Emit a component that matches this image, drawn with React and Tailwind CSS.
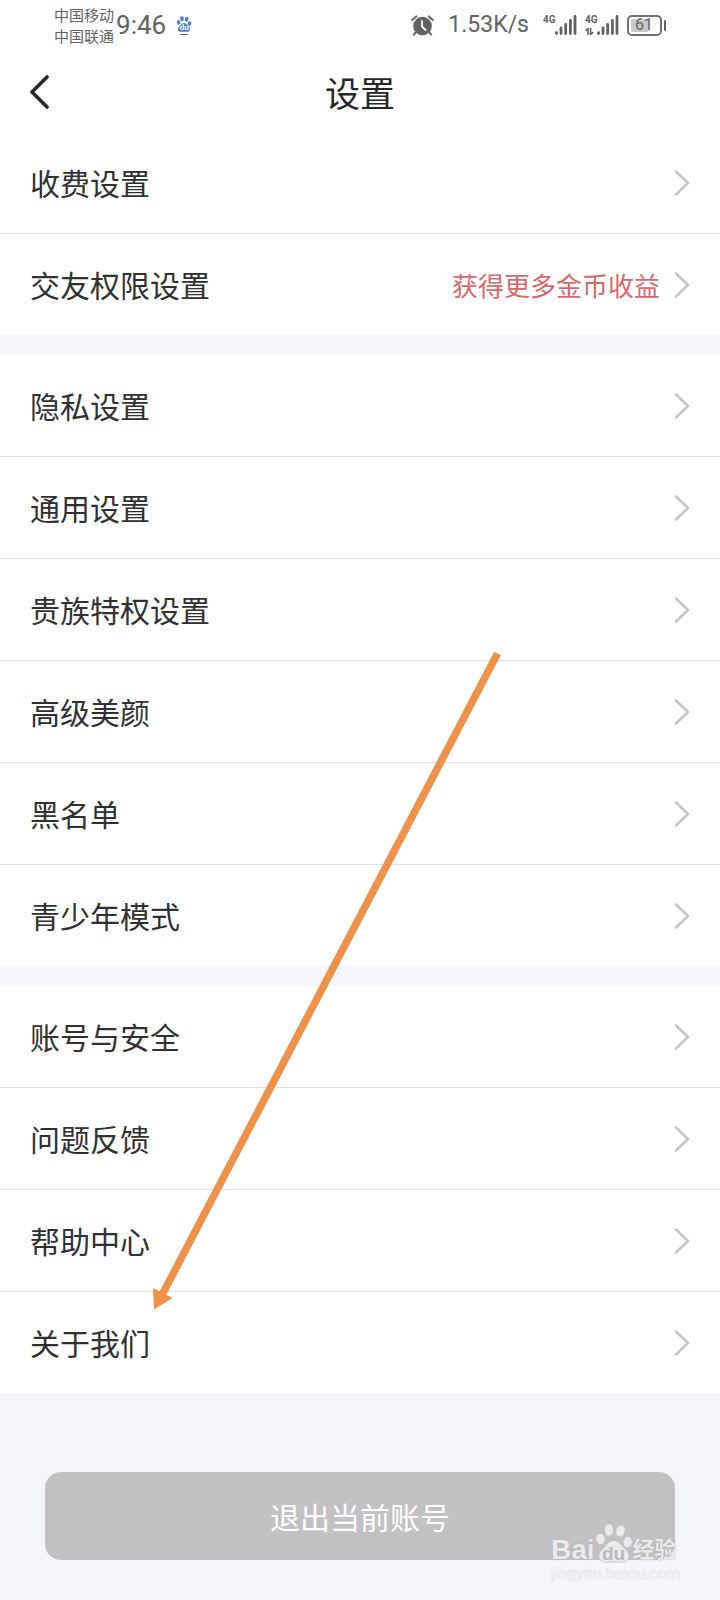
import React from "react";

const GROUPS = [
  [
    { id: "charge", label: "收费设置" },
    { id: "friends", label: "交友权限设置", hint: "获得更多金币收益" },
  ],
  [
    { id: "privacy", label: "隐私设置" },
    { id: "general", label: "通用设置" },
    { id: "noble", label: "贵族特权设置" },
    { id: "beauty", label: "高级美颜" },
    { id: "blacklist", label: "黑名单" },
    { id: "teen", label: "青少年模式" },
  ],
  [
    { id: "account", label: "账号与安全" },
    { id: "feedback", label: "问题反馈" },
    { id: "help", label: "帮助中心" },
    { id: "about", label: "关于我们" },
  ],
];

const AlarmIcon = () => (
  <svg width="23" height="21" viewBox="0 0 23 21" aria-hidden="true">
    <circle cx="11.5" cy="11" r="9.3" fill="#626262" />
    <path
      d="M1.2 5 L5.2 1.4 M21.8 5 L17.8 1.4 M5 17 L2.8 19.6 M18 17 L20.2 19.6"
      stroke="#626262"
      strokeWidth="2"
      strokeLinecap="round"
    />
    <path
      d="M11 6 V11.5 L14.6 15"
      fill="none"
      stroke="#fff"
      strokeWidth="1.8"
      strokeLinecap="round"
    />
  </svg>
);

const Signal = ({ active = false }) => (
  <div className="flex h-5">
    <div className="flex w-3 flex-col justify-between">
      <span className="font-[Roboto] text-[10px] leading-[10px] font-bold">
        4G
      </span>
      {active && (
        <svg width="9" height="7" viewBox="0 0 9 7" aria-hidden="true">
          <path
            d="M0.5 2.8 L3 0.6 V7 M5.6 0 V6.4 L8.4 4.2"
            fill="none"
            stroke="#626262"
            strokeWidth="1.6"
          />
        </svg>
      )}
    </div>
    <svg width="22" height="20" viewBox="0 0 22 20" aria-hidden="true">
      <path
        d="M1.5 18.6 V17.6 M6 18.6 V13 M10.7 18.6 V9.5 M15.4 18.6 V5.5 M20 18.6 V1.4"
        stroke="#626262"
        strokeWidth="2.8"
        strokeLinecap="round"
      />
    </svg>
  </div>
);

const Battery = () => (
  <div className="flex items-center gap-[2px]">
    <div className="flex h-[21px] w-[35px] items-center rounded-[5px] border-2 border-[#707070] p-[2px]">
      <div className="flex h-full w-[18px] items-center rounded-[2px] bg-[#c9c9c9] pl-1">
        <span className="font-[Roboto] text-base leading-none">61</span>
      </div>
    </div>
    <div className="h-[11px] w-[2px] rounded-full bg-[#626262]" />
  </div>
);

// Shared paw shape, the colours come from the caller
const Paw = ({ className, stroke }) => (
  <svg className={className} viewBox="0 0 38 40" fill="currentColor" aria-hidden="true">
    <g stroke={stroke} strokeWidth={stroke ? 0.7 : 0}>
      <ellipse cx="5.5" cy="16" rx="4.6" ry="5.8" transform="rotate(-12 5.5 16)" />
      <ellipse cx="14" cy="7" rx="4.6" ry="6.2" />
      <ellipse cx="25.5" cy="8" rx="4.6" ry="6.2" transform="rotate(12 25.5 8)" />
      <ellipse cx="32.7" cy="19" rx="4.6" ry="5.8" transform="rotate(8 32.7 19)" />
      <path d="M19 17.5 C23 17.5 25 20 28 23.5 C31.5 27 34.5 29 34 33.5 C33.5 38.5 30 39.5 26 39.3 C21 39 17 39 12.5 39.3 C7.5 39.6 4 38 3.8 33.5 C3.6 29 7 27 10 23.5 C12.5 20.5 14.5 17.5 19 17.5 Z" />
    </g>
  </svg>
);

const StatusBar = () => (
  <div className="flex h-[50px] items-center justify-between px-[54px] text-[#626262]">
    <div className="flex items-center">
      <div className="text-[15px] leading-[21px]">
        <div>中国移动</div>
        <div>中国联通</div>
      </div>
      <span className="ml-[2px] font-[Roboto] text-[26px] leading-8">9:46</span>
      <div className="ml-[10px] flex flex-col items-center gap-[2px]">
        <div className="relative">
          <Paw className="h-4 w-4 text-[#4a7cc9]" />
          <span className="absolute inset-x-0 bottom-0 text-center font-[Roboto] text-[8px] leading-[8px] font-bold text-white">
            du
          </span>
        </div>
        <div className="h-px w-2 bg-[#626262]" />
      </div>
    </div>
    <div className="flex items-center">
      <AlarmIcon />
      <span className="ml-[14px] font-[Roboto] text-[23px] leading-8">
        1.53K/s
      </span>
      <div className="ml-[14px] flex gap-2">
        <Signal />
        <Signal active />
      </div>
      <div className="ml-2">
        <Battery />
      </div>
    </div>
  </div>
);

const Header = () => (
  <header className="grid h-[82px] grid-cols-[1fr_auto_1fr] items-center px-[30px] pt-[2px]">
    <button type="button" aria-label="返回" className="justify-self-start">
      <svg width="19" height="34" viewBox="0 0 19 34" aria-hidden="true">
        <path
          d="M17 2 L2 17 L17 32"
          fill="none"
          stroke="#262626"
          strokeWidth="3.6"
          strokeLinecap="round"
          strokeLinejoin="round"
        />
      </svg>
    </button>
    <h1 className="text-[35px] leading-[52px] text-[#262626]">设置</h1>
  </header>
);

const SettingRow = ({ item }) => (
  <li className="border-b border-[#dfdfdf] last:border-b-0">
    <a
      href={`#${item.id}`}
      className="flex items-center justify-between px-[30px] py-7"
    >
      <span className="text-[30px] leading-[45px] text-[#303030]">
        {item.label}
      </span>
      <span className="flex items-center gap-[14px]">
        {item.hint && (
          <span className="text-[26px] leading-[45px] text-[#d9686b]">
            {item.hint}
          </span>
        )}
        <svg width="16" height="26" viewBox="0 0 16 26" aria-hidden="true">
          <path
            d="M2 1.5 L14 13 L2 24.5"
            fill="none"
            stroke="#c6c6c6"
            strokeWidth="2.6"
            strokeLinecap="round"
            strokeLinejoin="round"
          />
        </svg>
      </span>
    </a>
  </li>
);

const Watermark = () => (
  <div className="pointer-events-none absolute right-10 bottom-4 font-[Liberation_Sans,Noto_Sans_CJK_SC,sans-serif] text-[#ebebed] [text-shadow:0_0_2px_#a9a9ad]">
    <div className="flex items-end">
      <span className="text-[28px] leading-7 font-bold">Bai</span>
      <div className="relative">
        <Paw className="h-[42px] w-[38px]" stroke="#b8b8bc" />
        <span className="absolute inset-x-0 bottom-0 text-center text-[19px] leading-5 font-bold text-[#b9b8bb] [text-shadow:none]">
          du
        </span>
      </div>
      <span className="text-[22px] leading-7 font-bold">经验</span>
    </div>
    <div className="text-base leading-5 text-[#f3f3f6] [text-shadow:0_0_1px_#c4c4c8]">
      jingyan.baidu.com
    </div>
  </div>
);

// Annotation arrow pointing at the last row
const PointerArrow = () => (
  <svg
    className="pointer-events-none absolute inset-x-0 top-0 w-full"
    viewBox="0 0 720 1600"
    aria-hidden="true"
  >
    <path d="M497.5 653.5 L162 1295" stroke="#ee9149" strokeWidth="7.5" />
    <path d="M154 1309.5 L153 1288 L172.5 1298 Z" fill="#ee9149" />
  </svg>
);

const App = () => {
  return (
    <div className="relative flex min-h-screen flex-col bg-[#f5f6fa] font-[Noto_Sans_CJK_SC,sans-serif]">
      <div className="bg-white">
        <StatusBar />
        <Header />
      </div>
      <main className="flex flex-col gap-5">
        {GROUPS.map((group) => (
          <ul key={group[0].id} className="bg-white">
            {group.map((item) => (
              <SettingRow key={item.id} item={item} />
            ))}
          </ul>
        ))}
      </main>
      <footer className="relative flex-1 px-[45px] pt-[79px] pb-8">
        <button
          type="button"
          className="h-[88px] w-full rounded-2xl bg-[#c3c0c3] text-[30px] leading-[45px] text-white"
        >
          退出当前账号
        </button>
        <Watermark />
      </footer>
      <PointerArrow />
    </div>
  );
};

export default App;
